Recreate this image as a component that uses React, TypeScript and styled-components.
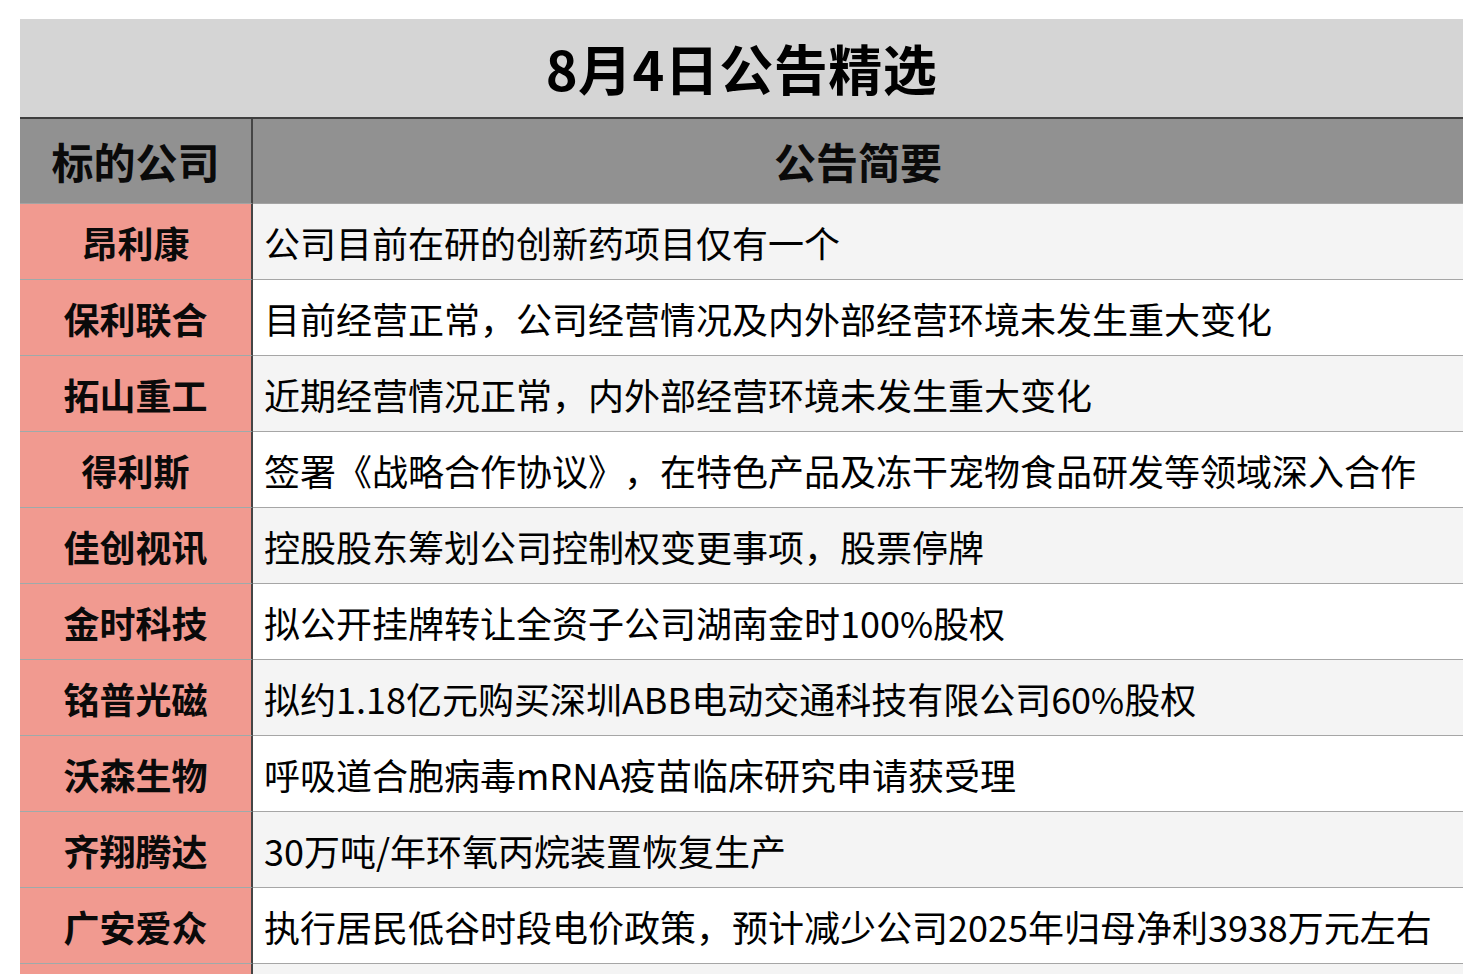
import { Fragment } from "react";
import styled, { createGlobalStyle } from "styled-components";

const GlobalStyle = createGlobalStyle`
  html, body {
    margin: 0;
    padding: 0;
    background: #ffffff;
  }
  body {
    font-family: "Noto Sans CJK SC", "Noto Sans", sans-serif;
    color: #000;
    overflow: hidden;
    text-spacing-trim: space-all;
  }
`;

const Page = styled.div`
  padding: 19px 19px 0 20px;
`;

const Table = styled.div`
  display: grid;
  grid-template-columns: 233px 1fr;
  width: 1443px;
`;

const TitleBar = styled.div`
  grid-column: 1 / -1;
  height: 98px;
  background: #d5d5d5;
  border-bottom: 2px solid #3e3e3e;
  display: flex;
  align-items: center;
  justify-content: center;
  font-size: 54px;
  font-weight: 700;
  line-height: 1;
  letter-spacing: 0.5px;
`;

const HeadCell = styled.div`
  height: 84px;
  background: #919191;
  border-bottom: 1px solid #a3a3a3;
  display: flex;
  align-items: center;
  justify-content: center;
  font-size: 42px;
  font-weight: 700;
  line-height: 1;
  color: #0a0a0a;
`;

const LeftHead = styled(HeadCell)`
  border-right: 2px solid #454545;
`;

const NameCell = styled.div`
  height: 75px;
  background: #f19a90;
  border-bottom: 1px solid #9eaaaa;
  border-right: 2px solid #454545;
  display: flex;
  align-items: center;
  justify-content: center;
  font-size: 36px;
  font-weight: 700;
  line-height: 1;
  color: #0a0a0a;
`;

const TextCell = styled.div<{ $shade: boolean }>`
  height: 75px;
  background: ${({ $shade }) => ($shade ? "#f4f4f4" : "#ffffff")};
  border-bottom: 1px solid #a6a6a6;
  display: flex;
  align-items: center;
  padding-left: 11px;
  font-size: 36px;
  font-weight: 400;
  line-height: 1;
  white-space: nowrap;
  color: #000;
`;

const rows: [string, string][] = [
  ["昂利康", "公司目前在研的创新药项目仅有一个"],
  ["保利联合", "目前经营正常，公司经营情况及内外部经营环境未发生重大变化"],
  ["拓山重工", "近期经营情况正常，内外部经营环境未发生重大变化"],
  ["得利斯", "签署《战略合作协议》，在特色产品及冻干宠物食品研发等领域深入合作"],
  ["佳创视讯", "控股股东筹划公司控制权变更事项，股票停牌"],
  ["金时科技", "拟公开挂牌转让全资子公司湖南金时100%股权"],
  ["铭普光磁", "拟约1.18亿元购买深圳ABB电动交通科技有限公司60%股权"],
  ["沃森生物", "呼吸道合胞病毒mRNA疫苗临床研究申请获受理"],
  ["齐翔腾达", "30万吨/年环氧丙烷装置恢复生产"],
  ["广安爱众", "执行居民低谷时段电价政策，预计减少公司2025年归母净利3938万元左右"],
  ["", ""],
];

function App() {
  return (
    <>
      <GlobalStyle />
      <Page>
        <Table>
          <TitleBar>8月4日公告精选</TitleBar>
          <LeftHead>标的公司</LeftHead>
          <HeadCell>公告简要</HeadCell>
          {rows.map(([name, text], i) => (
            <Fragment key={i}>
              <NameCell>{name}</NameCell>
              <TextCell $shade={i % 2 === 0}>{text}</TextCell>
            </Fragment>
          ))}
        </Table>
      </Page>
    </>
  );
}

export default App;
